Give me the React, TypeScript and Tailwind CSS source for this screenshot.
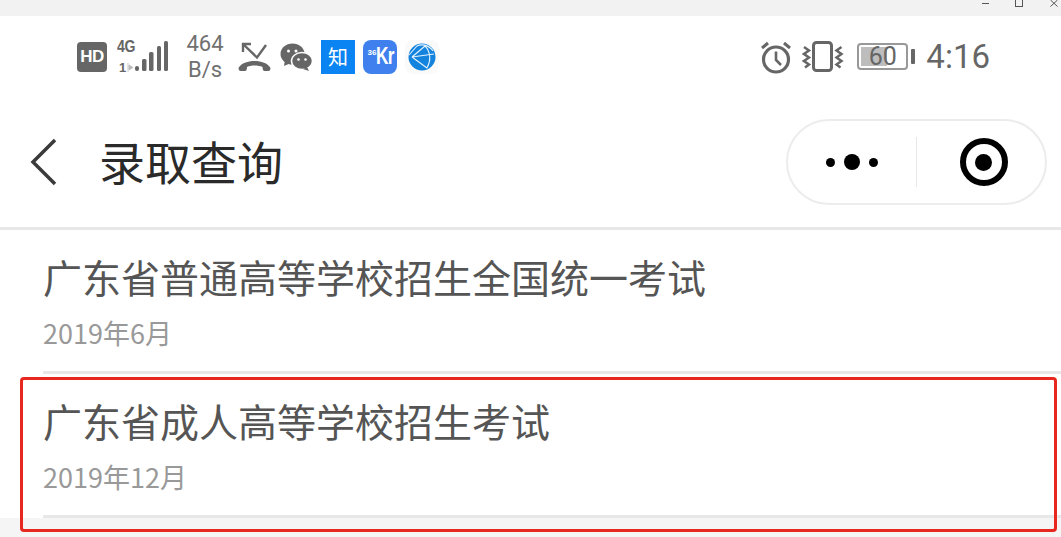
import React from "react";

const Signal = () => (
  <div className="flex w-[52px] h-[32px] items-stretch">
    <div className="flex flex-col justify-between w-[18px] font-['Liberation_Sans',sans-serif] font-bold text-[#666]">
      <span className="block text-[16px] leading-[14px] tracking-[-0.5px] [transform:scaleX(0.88)] origin-left mt-[-1px]">4G</span>
      <span className="flex items-center text-[13px] leading-[11px] pl-[2px]">
        1
        <svg width="7" height="9" viewBox="0 0 7 9" className="ml-[1px]">
          <path d="M1 0v9M2 2l4 2.500-4 2.500z" fill="#bbb" stroke="#bbb" strokeWidth="0.800" />
        </svg>
      </span>
    </div>
    <svg width="34" height="32" viewBox="0 0 34 32">
      <rect x="0" y="25" width="4" height="5" rx="2" fill="#666" />
      <rect x="7" y="18" width="4.500" height="12" rx="1.500" fill="#666" />
      <rect x="14" y="11" width="4.500" height="19" rx="1.500" fill="#666" />
      <rect x="22" y="5" width="4" height="25" rx="1.500" fill="#666" />
      <rect x="29" y="0" width="4" height="30" rx="1.500" fill="#666" />
    </svg>
  </div>
);

const MissedCall = () => (
  <svg width="34" height="32" viewBox="0 0 34 32" fill="none">
    <path d="M13 3H5v8M5 3l14 13.500L28 4" stroke="#666" strokeWidth="2.400" />
    <path d="M0.500 27c3-5 9-7 16-7s13 2 16 7c0 2-1 3-2 3h-4c-1 0-2-1-2-4-2-1-5-1.500-8-1.500S11 25 9 26c0 3-1 4-2 4H2.500c-1 0-2-1-2-3z" fill="#666" />
  </svg>
);

const Wechat = () => (
  <svg width="33" height="28" viewBox="0 0 33 28">
    <ellipse cx="12.500" cy="11" rx="12" ry="10.500" fill="#666" />
    <path d="M5 17l-1 6 7-3z" fill="#666" />
    <ellipse cx="22" cy="18" rx="10.500" ry="8.500" fill="#666" stroke="#fff" strokeWidth="1.500" />
    <path d="M27 24l2 4-6-2z" fill="#666" />
    <circle cx="8.500" cy="8" r="1.500" fill="#fff" />
    <circle cx="16" cy="8" r="1.500" fill="#fff" />
    <circle cx="18.500" cy="16.500" r="1.300" fill="#fff" />
    <circle cx="25.500" cy="16.500" r="1.300" fill="#fff" />
  </svg>
);

const Globe = () => (
  <div className="w-[34px] h-[34px] rounded-[8px] bg-[#fafafa] flex items-center justify-center">
    <svg width="28" height="28" viewBox="0 0 28 28" fill="none">
      <circle cx="14" cy="14" r="13.500" fill="#1483dd" />
      <path d="M1 12 L9 3 M4 14 L17 3 M4 14 L19 25 M4 14 L26 11 M17 3 C23 9 23 18 19 25 M9 3 C13 1 20 1 25 8" stroke="#e4f3ff" strokeWidth="1.100" />
    </svg>
  </div>
);

const Alarm = () => (
  <svg width="32" height="34" viewBox="0 0 32 34" fill="none">
    <circle cx="16" cy="19.500" r="12.500" stroke="#666" strokeWidth="3.200" />
    <path d="M16 11.500v8.500l5 5" stroke="#666" strokeWidth="2.600" />
    <path d="M2 8l6-5M30 8l-6-5" stroke="#666" strokeWidth="3" />
  </svg>
);

const Vibrate = () => (
  <svg width="42" height="32" viewBox="0 0 42 32" fill="none">
    <rect x="11.500" y="1.500" width="18" height="28" rx="3" stroke="#666" strokeWidth="3" />
    <path d="M2 6l5 3.500-5 3.500 5 3.500-5 3.500 5 3.500-4 3" stroke="#666" strokeWidth="2.500" />
    <path d="M39.500 6l-5 3.500 5 3.500-5 3.500 5 3.500-5 3.500 4 3" stroke="#666" strokeWidth="2.500" />
  </svg>
);

const Battery = () => (
  <div className="flex items-center gap-[3px]">
    <div className="relative w-[51px] h-[27px] rounded-[4px] border-2 border-[#999] flex items-center justify-center overflow-hidden">
      <div className="absolute left-[2px] top-[2px] bottom-[2px] w-[26px] bg-[#bdbdbd]" />
      <span className="relative text-[25px] leading-none text-[#666] font-['Roboto',sans-serif]">60</span>
    </div>
    <div className="w-[4px] h-[15px] bg-[#666] rounded-[1px]" />
  </div>
);

const Row = ({ title, date }: { title: string; date: string }) => (
  <div className="ml-[43px] border-b-[3px] border-[#e8e8e8] pt-[23px] pb-[22px]">
    <div className="text-[39px] leading-[46px] text-[#555]">{title}</div>
    <div className="text-[27px] leading-[32px] text-[#999] mt-[18px]">{date}</div>
  </div>
);

export default function App() {
  return (
    <div className="relative w-[1061px] h-[537px] overflow-hidden bg-white font-['Noto_Sans_CJK_SC','Noto_Sans',sans-serif]">
      <div className="h-[16px] bg-[#f2f2f2] flex items-start justify-end">
        <div className="w-[7px] h-px bg-[#555] mt-[3px]" />
        <div className="w-[8px] h-[7px] border border-[#555] border-t-0 ml-[26px]" />
        <svg width="8" height="7" viewBox="0 0 8 7" className="ml-[27px] mr-[3px]" fill="none">
          <path d="M0.500 0L7.500 6.500M7.500 0L0.500 6.500" stroke="#555" strokeWidth="1" />
        </svg>
      </div>

      <div className="h-[81px] flex items-center justify-between pl-[77px] pr-[71px]">
        <div className="flex items-center">
          <div className="w-[30px] h-[30px] rounded-[4px] bg-[#666] text-white text-[17px] font-bold flex items-center justify-center font-['Liberation_Sans',sans-serif] tracking-[-0.5px]">HD</div>
          <div className="ml-[10px]"><Signal /></div>
          <div className="ml-[15px] w-[42px] text-center text-[22px] leading-[26px] text-[#707070] font-['Roboto',sans-serif]">
            <div>464</div>
            <div>B/s</div>
          </div>
          <div className="ml-[12px]"><MissedCall /></div>
          <div className="ml-[8px]"><Wechat /></div>
          <div className="ml-[8px] w-[34px] h-[34px] bg-[#0a84f2] text-white text-[20px] leading-none flex items-center justify-center">知</div>
          <div className="ml-[8px] w-[34px] h-[34px] rounded-[8px] bg-[#3f80ee] text-white font-bold flex items-center justify-center font-['Liberation_Sans',sans-serif]">
            <span className="text-[8px] leading-none mb-[8px]">36</span>
            <span className="text-[23px] leading-none tracking-[-1px] [transform:scaleX(0.75)] origin-left w-[16px]">Kr</span>
          </div>
          <div className="ml-[8px]"><Globe /></div>
        </div>
        <div className="flex items-center">
          <Alarm />
          <div className="ml-[10px]"><Vibrate /></div>
          <div className="ml-[13px]"><Battery /></div>
          <div className="ml-[11px] text-[33px] leading-none text-[#666] font-['Roboto',sans-serif]">4:16</div>
        </div>
      </div>

      <div className="h-[133px] pt-[22px] border-b-[3px] border-[#e8e8e8] flex items-start pl-[27px] pr-[14px]">
        <div className="h-[86px] flex items-center">
          <svg width="32" height="48" viewBox="0 0 32 48" fill="none">
            <path d="M28 2 L6 24 L28 46" stroke="#3a3a3a" strokeWidth="3.500" />
          </svg>
          <div className="ml-[40px] mb-[4px] text-[46px] leading-none text-[#2a2a2a]">录取查询</div>
        </div>
        <div className="ml-auto h-[86px] w-[261px] rounded-full border-2 border-[#ececec] flex items-center">
          <div className="w-[128px] flex items-center justify-center gap-[9px]">
            <span className="w-[9px] h-[9px] rounded-full bg-black" />
            <span className="w-[16px] h-[16px] rounded-full bg-black" />
            <span className="w-[9px] h-[9px] rounded-full bg-black" />
          </div>
          <div className="w-px h-[50px] bg-[#e8e8e8]" />
          <div className="flex-1 flex items-center justify-center pl-[5px]">
            <div className="w-[48px] h-[48px] rounded-full border-[6px] border-black flex items-center justify-center">
              <div className="w-[17px] h-[17px] rounded-full bg-black" />
            </div>
          </div>
        </div>
      </div>

      <Row title="广东省普通高等学校招生全国统一考试" date="2019年6月" />
      <Row title="广东省成人高等学校招生考试" date="2019年12月" />
      <div className="h-[30px] bg-[#f5f5f5]" />

      <div className="absolute left-[20px] top-[377px] w-[1037px] h-[155px] rounded-[4px] border-[3px] border-[#e8281e]" />
    </div>
  );
}
